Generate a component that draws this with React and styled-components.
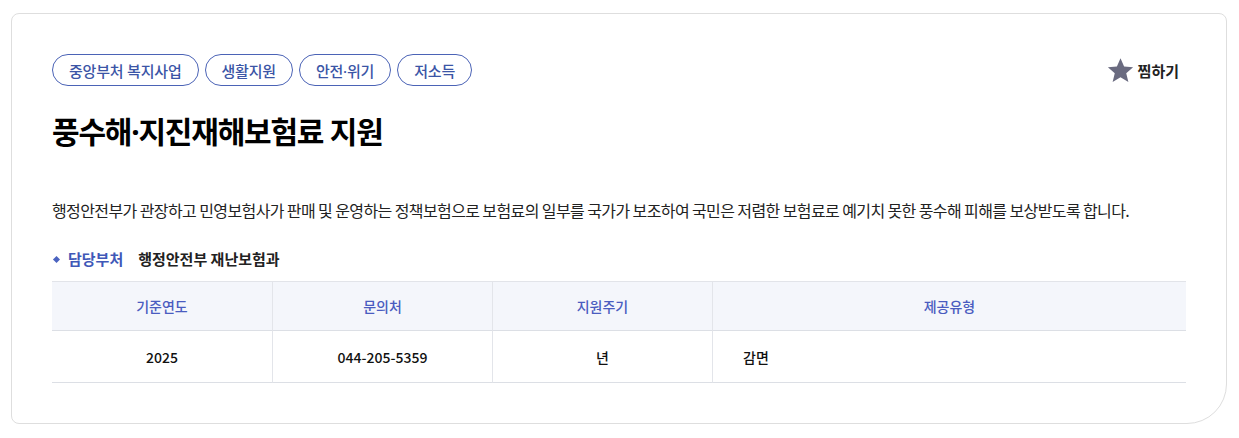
import React from "react";
import styled, { createGlobalStyle } from "styled-components";

const Global = createGlobalStyle`
  html, body { margin: 0; padding: 0; background: #fff; }
  body { font-family: "Noto Sans CJK KR", "Noto Sans", sans-serif; color: #111; }
`;

const Page = styled.div`
  padding: 13px 12px 14px 11px;
`;

const Card = styled.section`
  border: 1px solid #dedede;
  border-radius: 8px 8px 40px 8px;
  padding: 40px 40px 40px 40px;
  background: #fff;
`;

const TopRow = styled.div`
  display: flex;
  justify-content: space-between;
  align-items: center;
`;

const Tags = styled.div`
  display: flex;
  gap: 6px;
`;

const Tag = styled.span`
  display: inline-flex;
  align-items: center;
  height: 32px;
  box-sizing: border-box;
  padding: 0 16px;
  border: 1px solid #4b63b6;
  border-radius: 16px;
  color: #3b55a6;
  font-family: "Noto Sans", "Noto Sans CJK KR", sans-serif;
  font-size: 15px;
  font-weight: 500;
  letter-spacing: -0.2px;
`;

const Fav = styled.button`
  display: flex;
  align-items: center;
  gap: 4px;
  background: none;
  border: 0;
  padding: 0;
  margin-right: 7px;
  font-family: inherit;
  font-size: 15px;
  font-weight: 700;
  color: #222;
  cursor: pointer;
`;

const Title = styled.h1`
  margin: 26px 0 0;
  font-family: "Noto Sans", "Noto Sans CJK KR", sans-serif;
  font-size: 30px;
  font-weight: 700;
  letter-spacing: -1.2px;
  line-height: 40px;
  color: #000;
`;

const Desc = styled.p`
  margin: 46px 0 0;
  font-size: 16px;
  line-height: 24px;
  color: #222;
  letter-spacing: -0.6px;
`;

const DeptRow = styled.div`
  display: flex;
  align-items: center;
  margin-top: 25px;
  font-size: 15px;
  font-weight: 700;
  line-height: 24px;
`;

const Bullet = styled.span`
  width: 5px;
  height: 5px;
  background: #4b63c0;
  transform: rotate(45deg);
  margin: 0 9px 0 2px;
`;

const DeptLabel = styled.span`
  color: #4058b8;
  margin-right: 15px;
`;

const DeptValue = styled.span`
  color: #222;
`;

const Table = styled.div`
  margin-top: 10px;
  display: grid;
  grid-template-columns: 220px 220px 220px 1fr;
  border-top: 1px solid #e2e4e9;
`;

const Head = styled.div`
  height: 48px;
  display: flex;
  align-items: center;
  justify-content: center;
  background: #f4f6fb;
  color: #4a5cc0;
  font-size: 14px;
  font-weight: 500;
  border-bottom: 1px solid #dcdfe5;
  border-left: ${(p) => (p.$first ? "0" : "1px solid #e3e5ea")};
`;

const Cell = styled.div`
  height: 51px;
  display: flex;
  align-items: center;
  justify-content: ${(p) => (p.$left ? "flex-start" : "center")};
  padding-left: ${(p) => (p.$left ? "30px" : "0")};
  color: #111;
  font-size: 14px;
  font-weight: 500;
  border-bottom: 1px solid #dcdfe5;
  border-left: ${(p) => (p.$first ? "0" : "1px solid #e3e5ea")};
`;

const Star = () => (
  <svg width="27" height="27" viewBox="0 0 24 24" aria-hidden="true">
    <path
      d="M12 1l3.2 7.4 8 .7-6.1 5.3 1.9 7.9L12 18l-7 4.3 1.9-7.9L.8 9.1l8-.7z"
      fill="#6a6b80"
    />
  </svg>
);

export default function App() {
  const tags = ["중앙부처 복지사업", "생활지원", "안전·위기", "저소득"];
  return (
    <>
      <Global />
      <Page>
        <Card>
          <TopRow>
            <Tags>
              {tags.map((t) => (
                <Tag key={t}>{t}</Tag>
              ))}
            </Tags>
            <Fav>
              <Star />
              찜하기
            </Fav>
          </TopRow>
          <Title>풍수해·지진재해보험료 지원</Title>
          <Desc>
            행정안전부가 관장하고 민영보험사가 판매 및 운영하는 정책보험으로 보험료의 일부를 국가가 보조하여 국민은 저렴한 보험료로 예기치 못한 풍수해 피해를 보상받도록 합니다.
          </Desc>
          <DeptRow>
            <Bullet />
            <DeptLabel>담당부처</DeptLabel>
            <DeptValue>행정안전부 재난보험과</DeptValue>
          </DeptRow>
          <Table>
            <Head $first>기준연도</Head>
            <Head>문의처</Head>
            <Head>지원주기</Head>
            <Head>제공유형</Head>
            <Cell $first>2025</Cell>
            <Cell>044-205-5359</Cell>
            <Cell>년</Cell>
            <Cell $left>감면</Cell>
          </Table>
        </Card>
      </Page>
    </>
  );
}
